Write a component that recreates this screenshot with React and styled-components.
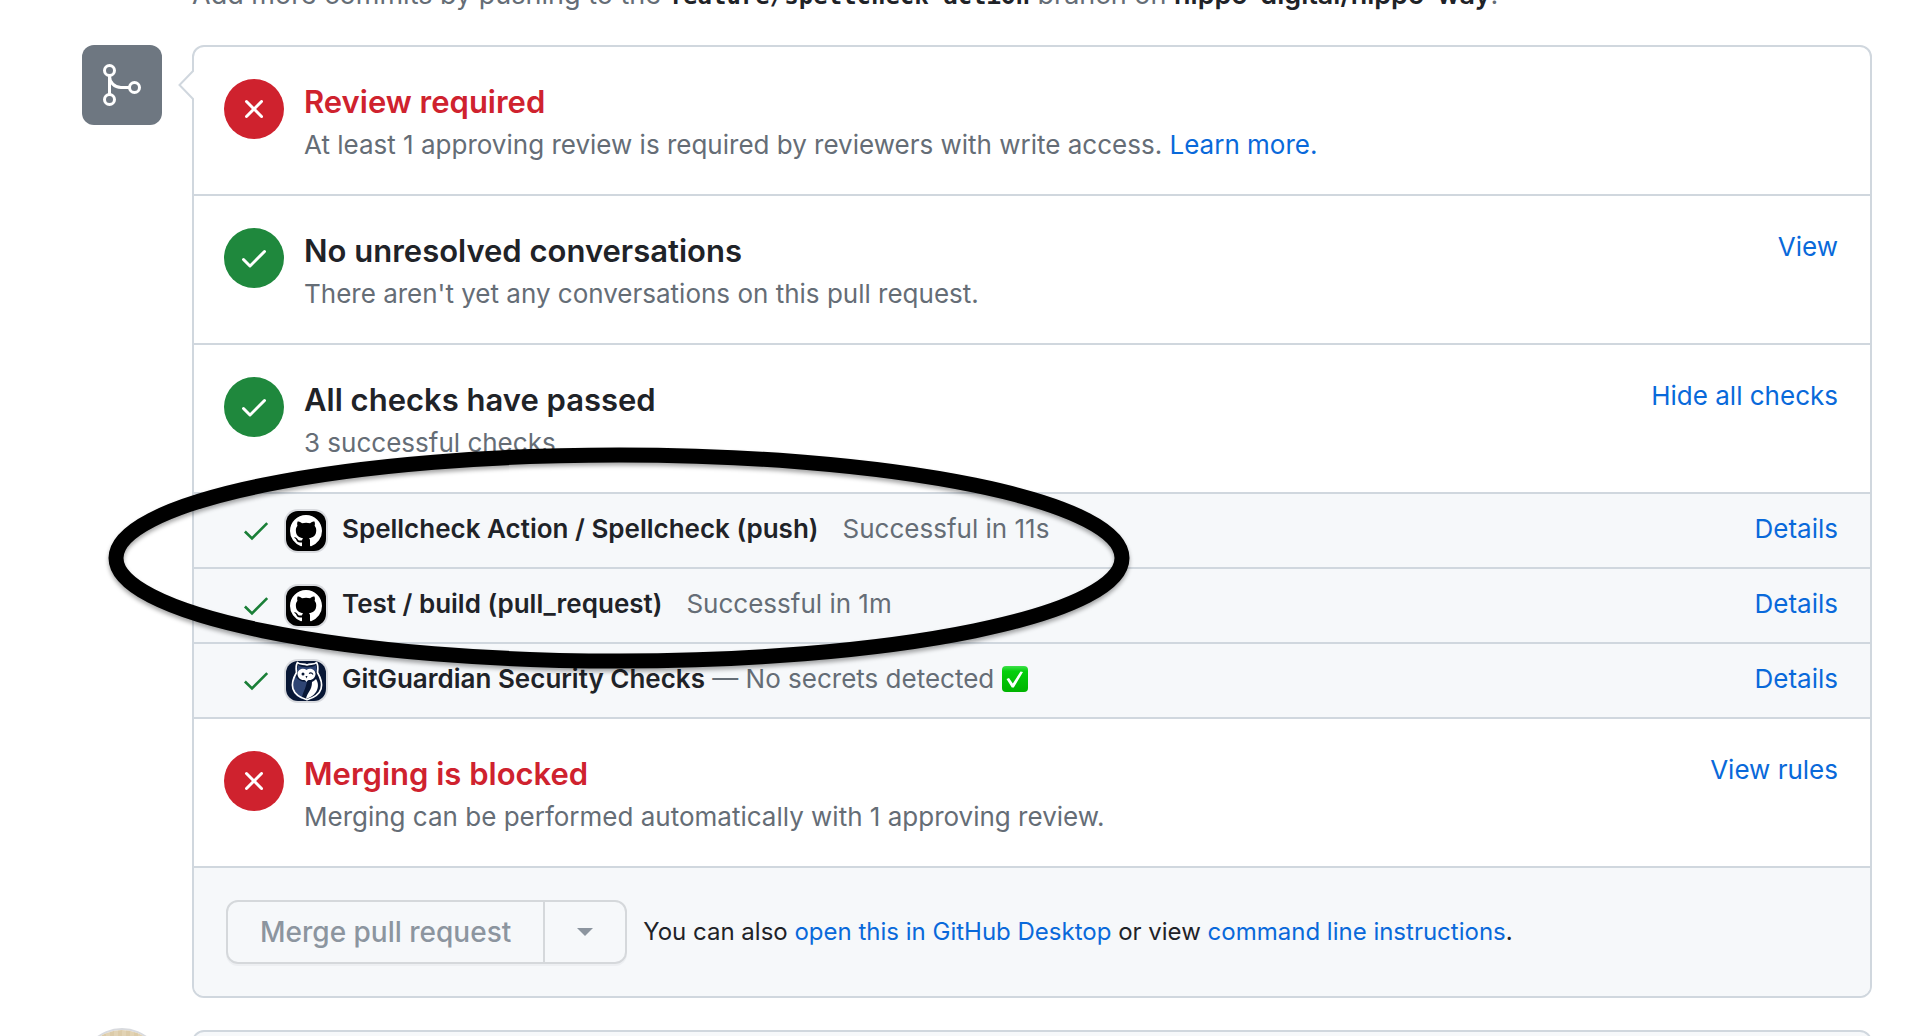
import React from "react";
import styled, { createGlobalStyle } from "styled-components";

const sans = `Inter, "Liberation Sans", sans-serif`;
const mono = `"DejaVu Sans Mono", "Liberation Mono", monospace`;
const c = {
  border: "#d0d7de",
  subtle: "#f6f8fa",
  text: "#1f2328",
  muted: "#656d76",
  link: "#0969da",
  danger: "#cf222e",
  success: "#1f883d",
};

const GlobalStyle = createGlobalStyle`
  * { box-sizing: border-box; }
  body { margin: 0; background: #fff; color: ${c.text}; font: 26px/38px ${sans}; }
`;

const Page = styled.main`
  position: relative;
  height: 100vh;
  overflow: hidden;
  padding: 0 38px 0 82px;
`;
const PushHint = styled.p`
  margin: -24px 0 31px 110px;
  font-size: 27px;
  color: ${c.muted};
  white-space: nowrap;
  strong { color: ${c.text}; font-weight: 600; }
`;
const Branch = styled.strong`
  font: 700 24px/24px ${mono};
`;
const TimelineItem = styled.div`
  display: flex;
  align-items: flex-start;
  gap: 30px;
  margin-bottom: 32px;
`;
const Badge = styled.div`
  flex: none;
  display: grid;
  place-items: center;
  width: 80px;
  height: 80px;
  border-radius: 12px;
  background: #6e7781;
`;
const Avatar = styled.div`
  flex: none;
  width: 80px;
  height: 80px;
  border-radius: 50%;
  background: repeating-linear-gradient(90deg, #e2d3b4 0 4px, #dccba8 4px 8px);
  box-shadow: 0 0 0 2px #d8dade;
`;
const Box = styled.section`
  position: relative;
  flex: 1;
  min-width: 0;
  border: 2px solid ${c.border};
  border-radius: 12px;
`;
const CommentBox = styled(Box)`
  min-height: 80px;
  background: ${c.subtle};
`;
const Caret = styled.svg`
  position: absolute;
  left: -16px;
  top: 22px;
`;
const Section = styled.div`
  display: flex;
  align-items: flex-start;
  gap: 20px;
  min-height: 149px;
  padding: 32px 32px 28px 30px;
  border-bottom: 2px solid ${c.border};
`;
const StatusCircle = styled.div`
  flex: none;
  display: grid;
  place-items: center;
  width: 60px;
  height: 60px;
  border-radius: 50%;
  background: ${(p) => (p.$ok ? c.success : c.danger)};
`;
const SectionText = styled.div`
  flex: 1;
  min-width: 0;
`;
const Heading = styled.h3`
  margin: 0;
  padding: 2px 0 3px;
  font-size: 31px;
  line-height: 42px;
  font-weight: 600;
  color: ${(p) => (p.$danger ? c.danger : c.text)};
`;
const Sub = styled.p`
  margin: 0;
  color: ${c.muted};
`;
const Link = styled.a`
  color: ${c.link};
  text-decoration: none;
`;
const LinkButton = styled.button`
  padding: 0;
  border: 0;
  background: none;
  color: ${c.link};
  font: inherit;
  cursor: pointer;
`;
const Checks = styled.ul`
  margin: 0;
  padding: 0;
  list-style: none;
`;
const CheckRow = styled.li`
  display: flex;
  align-items: center;
  height: 75px;
  padding: 0 32px 0 46px;
  background: ${c.subtle};
  border-bottom: 2px solid ${c.border};
`;
const AppIcon = styled.div`
  flex: none;
  display: grid;
  place-items: center;
  width: 40px;
  height: 40px;
  margin: 0 16px 0 14px;
  border-radius: 12px;
  overflow: hidden;
  background: ${(p) => p.$bg};
  box-shadow: 0 0 0 2px #d8dade;
`;
const CheckLine = styled.div`
  flex: 1;
  display: flex;
  justify-content: space-between;
  padding-bottom: 3px;
`;
const CheckText = styled.div`
  display: flex;
  align-items: center;
  color: ${c.muted};
  white-space: pre;
  strong { color: ${c.text}; font-weight: 600; }
`;
const Time = styled.span`
  margin-left: 24px;
`;
const MergeBar = styled.div`
  display: flex;
  align-items: center;
  gap: 16px;
  padding: 32px;
  background: ${c.subtle};
  border-radius: 0 0 10px 10px;
`;
const ButtonGroup = styled.div`
  display: flex;
  height: 64px;
  border: 2px solid #d5d8db;
  border-radius: 12px;
  box-shadow: 0 2px 0 rgba(31, 35, 40, 0.04);
`;
const MergeButton = styled.button`
  padding: 0 32px;
  border: 0;
  background: none;
  color: #8c959f;
  font: 500 28px/38px ${sans};
`;
const MenuButton = styled(MergeButton)`
  display: grid;
  place-items: center;
  border-left: 2px solid #d5d8db;
`;
const Footnote = styled.span`
  font-size: 24px;
`;
const Highlight = styled.svg`
  position: absolute;
  left: 101px;
  top: 440px;
  overflow: visible;
  pointer-events: none;
  filter: drop-shadow(0 3px 2px rgba(0, 0, 0, 0.35));
`;

const CHECK =
  "M13.78 4.22a.75.75 0 0 1 0 1.06l-7.25 7.25a.75.75 0 0 1-1.06 0L2.22 9.28a.751.751 0 0 1 .018-1.042.751.751 0 0 1 1.042-.018L6 10.94l6.72-6.72a.75.75 0 0 1 1.06 0Z";
const CROSS =
  "M3.72 3.72a.75.75 0 0 1 1.06 0L8 6.94l3.22-3.22a.749.749 0 0 1 1.275.326.749.749 0 0 1-.215.734L9.06 8l3.22 3.22a.749.749 0 0 1-.326 1.275.749.749 0 0 1-.734-.215L8 9.06l-3.22 3.22a.751.751 0 0 1-1.042-.018.751.751 0 0 1-.018-1.042L6.94 8 3.72 4.78a.75.75 0 0 1 0-1.06Z";
const MARK =
  "M8 0c4.42 0 8 3.58 8 8a8.013 8.013 0 0 1-5.45 7.59c-.4.08-.55-.17-.55-.38 0-.27.01-1.13.01-2.2 0-.75-.25-1.23-.54-1.48 1.78-.2 3.65-.88 3.65-3.95 0-.88-.31-1.59-.82-2.15.08-.2.36-1.02-.08-2.12 0 0-.67-.22-2.2.82-.64-.18-1.32-.27-2-.27-.68 0-1.36.09-2 .27-1.53-1.03-2.2-.82-2.2-.82-.44 1.1-.16 1.92-.08 2.12-.51.56-.82 1.28-.82 2.15 0 3.06 1.86 3.75 3.64 3.95-.23.2-.44.55-.51 1.07-.46.21-1.61.55-2.33-.66-.15-.24-.6-.83-1.23-.82-.67.01-.27.38.01.53.34.19.73.9.82 1.13.16.45.68 1.31 2.69.94 0 .67.01 1.3.01 1.49 0 .21-.15.45-.55.38A7.995 7.995 0 0 1 0 8c0-4.42 3.58-8 8-8Z";

const Glyph = ({ d }) => (
  <svg width="32" height="32" viewBox="0 0 16 16" fill="#fff" aria-hidden="true">
    <path d={d} />
  </svg>
);

const RowCheck = () => (
  <svg width="32" height="32" viewBox="0 0 16 16" fill="none" stroke="#1a7f37" strokeWidth="1.3" aria-hidden="true">
    <path d="m2.450 8.250 3.550 3.500 7.600-7.700" />
  </svg>
);

const MergeIcon = () => (
  <svg width="48" height="48" viewBox="0 0 24 24" fill="none" stroke="#fff" strokeWidth="1.5" aria-hidden="true">
    <circle cx="5.75" cy="4.75" r="2.5" />
    <circle cx="5.75" cy="19.25" r="2.5" />
    <circle cx="18.25" cy="13.25" r="2.5" />
    <path d="M5.75 7.25v9.5M5.75 7.5c0 3.2 2.5 5.75 5.75 5.75h4.25" />
  </svg>
);

const Owl = () => (
  <svg width="40" height="40" viewBox="0 0 40 40" aria-hidden="true">
    <path d="M21 20c-4 2-10-1-12-6-2 4-4 9-2 14 1 5 4 8 9 10 0-6 4-10 5-18Z" fill="#2f4573" />
    <path d="M12 4c3 3 15 3 18 0l1 6-10 4-10-4Z" fill="#2f4573" />
    <path d="M20.500 9c-3-2.500-8.500-1-9 3.500-.3 4 3.500 7 6.500 6.500 1.500 0 2.500 2 2.500 2s1-2 2.500-2c3 .5 6.800-2.500 6.500-6.500-.5-4.500-6-6-9-3.500Z" fill="#fff" />
    <path d="M30 18c5 8 0 17-10 20 1-7 6-8 6-17 2-1 3-2 4-3Z" fill="#fff" />
    <circle cx="17" cy="13" r="1.500" fill="#081735" />
    <path d="M23 12.500q2.500-1.500 4 1" fill="none" stroke="#081735" strokeWidth="1.200" />
    <path d="m19.500 15 1 2.500 1-2.500Z" fill="#081735" />
    <path d="M11.500 1.500c2 2.500 6 1 9.500 2.500 3.500-1.500 7.500 0 9.500-2.500 2 3 1.500 7 1 10 7 12 6 22-10.500 27.300C4.500 33.500 3.500 23.500 10.500 11.500c-.5-3-1-7 1-10Z" fill="none" stroke="#fff" strokeWidth="1.700" strokeLinejoin="round" />
  </svg>
);

const Emoji = () => (
  <svg width="26" height="26" viewBox="0 0 26 26" role="img" aria-label="check mark">
    <defs>
      <linearGradient id="tick" x1="0" y1="0" x2="0" y2="1">
        <stop offset="0" stopColor="#3fe04c" />
        <stop offset=".2" stopColor="#05cf0c" />
        <stop offset="1" stopColor="#00b300" />
      </linearGradient>
    </defs>
    <rect width="26" height="26" rx="4" fill="url(#tick)" />
    <path d="m4.500 13 2.500-1 3.800 5.500L18.500 5.500l2.500.5-9.200 15.500h-2Z" fill="#fff" />
  </svg>
);

const Status = ({ ok, title, text, action }) => (
  <Section>
    <StatusCircle $ok={ok}>
      <Glyph d={ok ? CHECK : CROSS} />
    </StatusCircle>
    <SectionText>
      <Heading $danger={!ok}>{title}</Heading>
      <Sub>{text}</Sub>
    </SectionText>
    {action}
  </Section>
);

const Check = ({ owl, name, children }) => (
  <CheckRow>
    <RowCheck />
    <AppIcon $bg={owl ? "#081735" : "#000"}>{owl ? <Owl /> : <Glyph d={MARK} />}</AppIcon>
    <CheckLine>
      <CheckText>
        <strong>{name}</strong>
        {children}
      </CheckText>
      <Link href="#details">Details</Link>
    </CheckLine>
  </CheckRow>
);

export default function App() {
  return (
    <Page>
      <GlobalStyle />
      <PushHint>
        Add more commits by pushing to the <Branch>feature/spellcheck-action</Branch> branch on{" "}
        <strong>hippo-digital/hippo-way</strong>.
      </PushHint>
      <TimelineItem>
        <Badge>
          <MergeIcon />
        </Badge>
        <Box>
          <Caret width="16" height="32" viewBox="0 0 16 32" aria-hidden="true">
            <path d="M16 1 1.500 16 16 31" fill="#fff" stroke={c.border} strokeWidth="2" />
          </Caret>
          <Status
            title="Review required"
            text={
              <>
                At least 1 approving review is required by reviewers with write access.{" "}
                <Link href="#learn">Learn more.</Link>
              </>
            }
          />
          <Status
            ok
            title="No unresolved conversations"
            text="There aren't yet any conversations on this pull request."
            action={<Link href="#view">View</Link>}
          />
          <Status
            ok
            title="All checks have passed"
            text="3 successful checks"
            action={<LinkButton type="button">Hide all checks</LinkButton>}
          />
          <Checks>
            <Check name="Spellcheck Action / Spellcheck (push)">
              <Time>Successful in 11s</Time>
            </Check>
            <Check name="Test / build (pull_request)">
              <Time>Successful in 1m</Time>
            </Check>
            <Check owl name="GitGuardian Security Checks">
              {" — No secrets detected "}
              <Emoji />
            </Check>
          </Checks>
          <Status
            title="Merging is blocked"
            text="Merging can be performed automatically with 1 approving review."
            action={<Link href="#rules">View rules</Link>}
          />
          <MergeBar>
            <ButtonGroup>
              <MergeButton type="button" disabled>
                Merge pull request
              </MergeButton>
              <MenuButton type="button" disabled aria-label="Select merge method">
                <svg width="16" height="8" viewBox="0 0 16 8" fill="#8c959f" aria-hidden="true">
                  <path d="M0 0h16L8 8Z" />
                </svg>
              </MenuButton>
            </ButtonGroup>
            <Footnote>
              You can also <Link href="#desktop">open this in GitHub Desktop</Link> or view{" "}
              <Link href="#cli">command line instructions</Link>.
            </Footnote>
          </MergeBar>
        </Box>
      </TimelineItem>
      <TimelineItem>
        <Avatar />
        <CommentBox />
      </TimelineItem>
      <Highlight width="1036" height="236" viewBox="0 0 1036 236" aria-hidden="true">
        <ellipse cx="518" cy="118" rx="503" ry="103" fill="none" stroke="#000" strokeWidth="15" />
      </Highlight>
    </Page>
  );
}
